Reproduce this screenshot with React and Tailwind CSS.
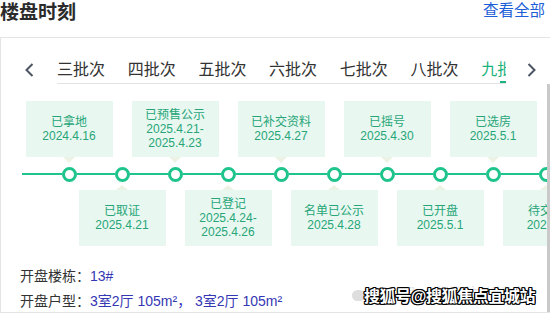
import * as React from 'react'

const TABS = ['三批次', '四批次', '五批次', '六批次', '七批次', '八批次', '九批次', '十批次']
const ACTIVE_TAB = '九批次'

const EVENTS = [
  { title: '已拿地', dates: ['2024.4.16'] },
  { title: '已取证', dates: ['2025.4.21'] },
  { title: '已预售公示', dates: ['2025.4.21-', '2025.4.23'] },
  { title: '已登记', dates: ['2025.4.24-', '2025.4.26'] },
  { title: '已补交资料', dates: ['2025.4.27'] },
  { title: '名单已公示', dates: ['2025.4.28'] },
  { title: '已摇号', dates: ['2025.4.30'] },
  { title: '已开盘', dates: ['2025.5.1'] },
  { title: '已选房', dates: ['2025.5.1'] },
  { title: '待交房', dates: ['2027年'] },
]

export default function App() {
  return (
    <div className="relative h-[316px] w-[550px] overflow-hidden bg-white font-['Liberation_Sans','Noto_Sans_CJK_SC',sans-serif] text-[#333]">
      <div className="flex h-[37px] items-start justify-between">
        <h2 className="text-[19px] font-bold leading-[26px] text-[#2b2b2b]">楼盘时刻</h2>
        <a className="pr-[5px] text-[15.5px] leading-[21px] text-[#1d5fd6]">查看全部</a>
      </div>

      <div className="border-y border-l border-[#e4e4e4]">
        <div className="flex h-[46px]">
          <div className="flex w-[56px] shrink-0 items-start pl-[24px] pt-[25px]">
            <Chevron dir="left" />
          </div>
          <div className="relative w-[449px] shrink-0 overflow-hidden border-b border-[#e2e2e2]">
            <div className="flex pt-[22px]">
              {TABS.map(tab => (
                <Tab key={tab} label={tab} active={tab === ACTIVE_TAB} />
              ))}
            </div>
          </div>
          <div className="flex grow items-start pl-[21px] pt-[25px]">
            <Chevron dir="right" />
          </div>
        </div>

        <div className="h-[228px] overflow-hidden border-r-[3px] border-[#c9c9c9]">
          <div className="flex pl-[21px] pt-[17px]">
            <div className="flex h-[146px] w-[20.5px] shrink-0 flex-col">
              <div className="h-[62px]" />
              <div className="flex h-[22px] items-center">
                <div className="h-[2px] w-full bg-[#1ec48b]" />
              </div>
            </div>
            {EVENTS.map((event, i) => (
              <Milestone key={event.title} {...event} top={i % 2 === 0} />
            ))}
            <div className="flex h-[146px] w-[60px] shrink-0 flex-col">
              <div className="h-[62px]" />
              <div className="flex h-[22px] items-center">
                <div className="h-[2px] w-full bg-[#1ec48b]" />
              </div>
            </div>
          </div>

          <div className="pl-[19px] pt-[17px] text-[14px] leading-[25px]">
            <div>
              开盘楼栋：<span className="text-[#3437b4]">13#</span>
            </div>
            <div>
              开盘户型：
              <span className="text-[#3437b4]">3室2厅 105m²， 3室2厅 105m²</span>
            </div>
          </div>
        </div>
      </div>

      {/* watermark */}
      <div className="absolute left-[352px] top-[283px] flex items-center gap-[4px] text-[16px] text-[#e6e6e6]">
        <span className="inline-block h-[11px] w-[13px] rounded-full bg-[#dedede]" />
        <span>公众号 · 文发杭州楼市</span>
      </div>
      <div className="absolute left-[364px] top-[287px] text-[16px] font-bold leading-[20px] tracking-[-0.4px] text-white [text-shadow:-1px_-1px_0_#000,1px_-1px_0_#000,-1px_1px_0_#000,1px_1px_0_#000,0_1px_0_#000,0_-1px_0_#000,1px_0_0_#000,-1px_0_0_#000]">
        搜狐号@搜狐焦点宜城站
      </div>
    </div>
  )
}

function Tab({ label, active }) {
  return (
    <div
      className={
        'relative h-[22px] w-[70.7px] shrink-0 text-[16px] leading-[20px] ' +
        (active ? 'text-[#1cb37e]' : 'text-[#333]')
      }
    >
      {label}
      {active && <span className="absolute bottom-[-1px] left-[19px] h-[2px] w-[10px] bg-[#1cb37e]" />}
    </div>
  )
}

function Milestone({ title, dates, top }) {
  return (
    <div className="flex h-[146px] w-[53px] shrink-0 flex-col items-center">
      <div className="flex h-[62px] flex-col items-center">
        {top && (
          <>
            <Card title={title} dates={dates} />
            <div className="h-0 w-0 border-x-[6px] border-t-[6px] border-x-transparent border-t-[#edf3e4]" />
          </>
        )}
      </div>
      <div className="flex h-[22px] w-full items-center">
        <div className="h-[2px] grow bg-[#1ec48b]" />
        <div className="h-[15px] w-[15px] shrink-0 rounded-full border-[3px] border-[#1ec48b] bg-white" />
        <div className="h-[2px] grow bg-[#1ec48b]" />
      </div>
      {!top && (
        <div className="flex flex-col items-center">
          <div className="h-0 w-0 border-x-[6px] border-b-[5px] border-x-transparent border-b-[#edf3e4]" />
          <Card title={title} dates={dates} />
        </div>
      )}
    </div>
  )
}

function Card({ title, dates }) {
  return (
    <div className="flex h-[56px] w-[87px] shrink-0 flex-col items-center justify-center bg-[#e8f8f0] text-center text-[12px] leading-[14px] text-[#27a578]">
      <div>{title}</div>
      {dates.map(d => (
        <div key={d}>{d}</div>
      ))}
    </div>
  )
}

function Chevron({ dir }) {
  return (
    <svg width="9" height="14" viewBox="0 0 9 14" fill="none">
      <polyline
        points={dir === 'left' ? '7.5,1 1.5,7 7.5,13' : '1.5,1 7.5,7 1.5,13'}
        stroke="#4b5563"
        strokeWidth="2"
      />
    </svg>
  )
}
